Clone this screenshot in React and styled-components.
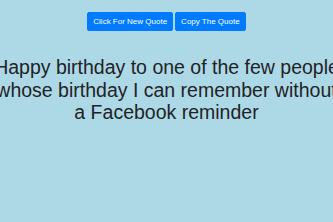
import React, { useState } from "react";
import styled, { createGlobalStyle } from "styled-components";

const GlobalStyle = createGlobalStyle`
  html, body {
    margin: 0;
    padding: 0;
    background: #add8e6;
    overflow: hidden;
  }
  body {
    font-family: "Liberation Sans", Arial, sans-serif;
    color: #212529;
  }
`;

const Page = styled.div`
  min-height: 100vh;
  display: flex;
  flex-direction: column;
  align-items: center;
  padding-top: 12px;
  box-sizing: border-box;
`;

const Toolbar = styled.div`
  display: flex;
  gap: 2px;
`;

const Button = styled.button`
  font-family: "Liberation Sans", Arial, sans-serif;
  font-size: 8px;
  line-height: 11px;
  padding: 3px 5px;
  color: #fff;
  background: #007bff;
  border: 1px solid #007bff;
  border-radius: 2px;
  cursor: pointer;
`;

const Quote = styled.p`
  flex-shrink: 0;
  margin: 25px 0 0;
  width: 345px;
  font-size: 19.5px;
  line-height: 22.5px;
  text-align: center;
  color: #1f2326;
`;

const quotes = [
  "Happy birthday to one of the few people whose birthday I can remember without a Facebook reminder"
];

export default function App() {
  const [index, setIndex] = useState(0);
  const quote = quotes[index];

  return (
    <Page>
      <GlobalStyle />
      <Toolbar>
        <Button onClick={() => setIndex((index + 1) % quotes.length)}>
          Click For New Quote
        </Button>
        <Button onClick={() => navigator.clipboard?.writeText(quote)}>
          Copy The Quote
        </Button>
      </Toolbar>
      <Quote>{quote}</Quote>
    </Page>
  );
}
